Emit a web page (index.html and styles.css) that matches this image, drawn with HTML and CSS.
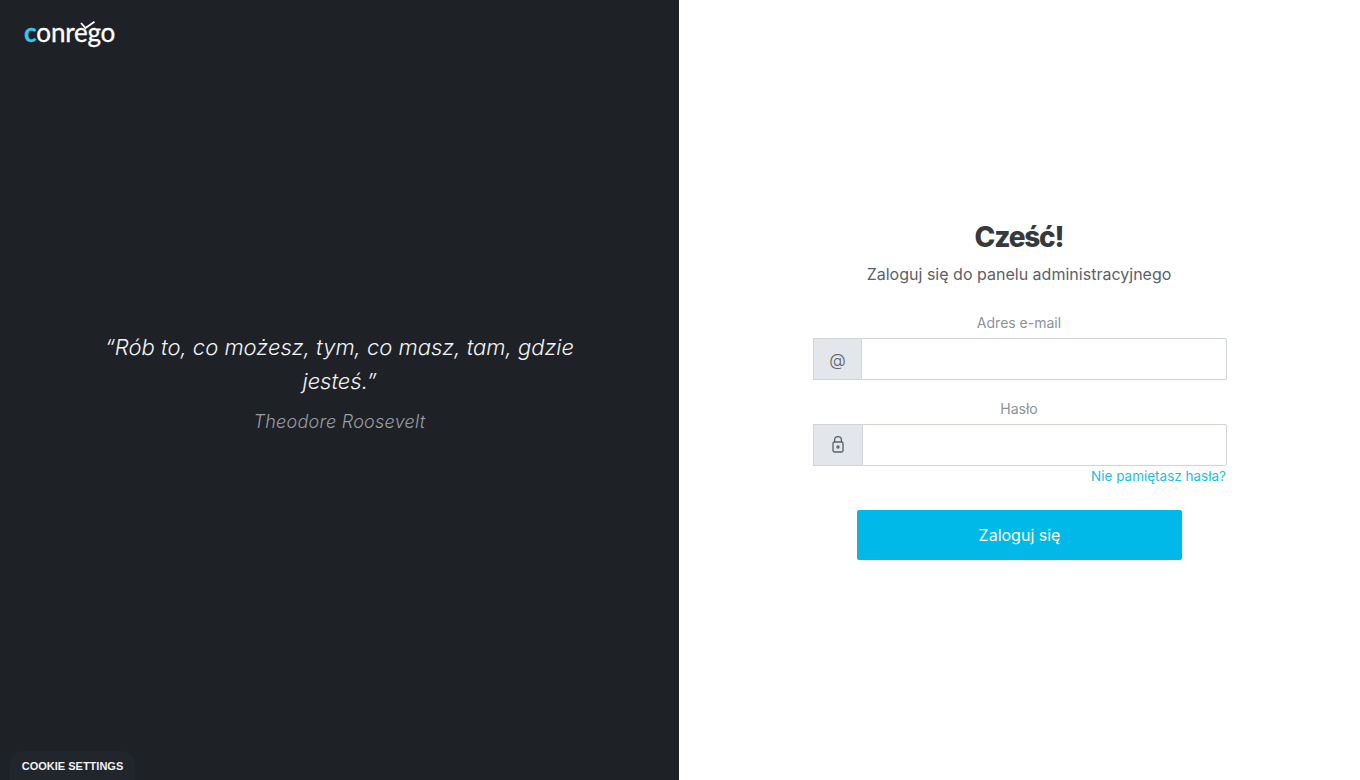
FILE: index.html
```html
<!DOCTYPE html>
<html lang="pl">
<head>
<meta charset="utf-8">
<title>Conrego</title>
<link rel="stylesheet" href="styles.css">
</head>
<body>
<main class="split">
  <section class="side">
    <div class="logo"><span class="logo-c">c</span>onr<span class="logo-e">e<svg class="logo-tick" viewBox="0 0 16 10" width="16" height="10"><path d="M1 2 5.5 7 14.5 .8" fill="none" stroke="#fff" stroke-width="1.8"/></svg></span>go</div>
    <blockquote class="quote">
      <p class="quote-text">“Rób to, co możesz, tym, co masz, tam, gdzie jesteś.”</p>
      <footer class="quote-author">Theodore Roosevelt</footer>
    </blockquote>
    <button class="cookie" type="button">COOKIE SETTINGS</button>
  </section>
  <section class="panel">
    <form class="form">
      <h1 class="title">Cześć!</h1>
      <p class="subtitle">Zaloguj się do panelu administracyjnego</p>
      <label class="label" for="email">Adres e-mail</label>
      <div class="group">
        <span class="addon">@</span>
        <input class="input" id="email" type="email">
      </div>
      <label class="label label-next" for="pass">Hasło</label>
      <div class="group">
        <span class="addon addon-lock">
          <svg viewBox="0 0 12 17" width="12" height="17" fill="none" stroke="#5a6169" stroke-width="1.3"><rect x="1" y="6" width="10" height="10" rx="1.4"/><path d="M2.6 6V4a3.4 3.4 0 0 1 6.8 0v2"/><circle cx="6" cy="11" r="1"/></svg>
        </span>
        <input class="input" id="pass" type="password">
      </div>
      <a class="forgot" href="#">Nie pamiętasz hasła?</a>
      <button class="submit" type="button">Zaloguj się</button>
    </form>
  </section>
</main>
</body>
</html>
```
FILE: styles.css
```css
* { box-sizing: border-box; }
html, body { margin: 0; height: 100%; }
body { font-family: Inter, "Liberation Sans", sans-serif; background: #fff; overflow: hidden; }
.split { display: flex; height: 780px; }
.side {
  position: relative;
  width: 679px;
  flex: none;
  background: #1e2227;
  display: flex;
  align-items: center;
  justify-content: center;
}
.logo {
  position: absolute;
  left: 24px;
  top: 16px;
  font-family: Lato, sans-serif;
  font-size: 26px;
  font-weight: 400;
  line-height: 32px;
  letter-spacing: -0.2px;
  color: #fff;
  -webkit-text-stroke: 0.3px #fff;
}
.logo-c { color: #3cc4ee; font-weight: 700; -webkit-text-stroke: 0.3px #3cc4ee; }
.logo-e { position: relative; }
.logo-tick { position: absolute; left: 6px; top: 5px; }
.quote { margin: 0 0 16px; width: 500px; text-align: center; font-style: italic; }
.quote-text { margin: 0 0 10px; font-size: 22px; line-height: 34px; color: #f1f3f5; font-weight: 300; }
.quote-author { font-size: 18px; line-height: 27px; letter-spacing: .25px; color: #9a9da1; font-weight: 300; }
.cookie {
  position: absolute;
  left: 10px;
  bottom: 0;
  width: 125px;
  height: 29px;
  padding: 2px 0 0;
  border: 0;
  border-radius: 14px 14px 0 0;
  background: #21262c;
  color: #f1f1f1;
  font-family: "Liberation Sans", sans-serif;
  font-size: 11px;
  font-weight: 700;
  line-height: 27px;
}
.panel { flex: 1; display: flex; justify-content: center; }
.form {
  width: 414px;
  margin-left: 1px;
  padding-top: 219px;
  display: flex;
  flex-direction: column;
  align-items: center;
}
.title { margin: 0 2px 0 0; font-size: 28px; line-height: 37px; font-weight: 800; color: #343a40; letter-spacing: -1.2px; }
.subtitle { margin: 6px 2px 0 0; font-size: 16px; line-height: 24px; letter-spacing: .01px; color: #5a6169; }
.label { display: block; margin: 26px 2px 0 0; font-size: 14px; line-height: 21px; color: #8b9299; font-weight: 400; }
.label-next { margin-top: 18px; }
.group { display: flex; width: 100%; height: 42px; margin-top: 5px; }
.addon {
  flex: none;
  width: 48px;
  display: flex;
  align-items: center;
  justify-content: center;
  background: #e3e6ea;
  border: 1px solid #ced4da;
  border-right: 0;
  color: #5a6169;
  font-size: 17px;
  font-weight: 300;
  padding-top: 2px;
}
.addon-lock { width: 49px; padding: 0 0 2px; }
.input { flex: 1; min-width: 0; border: 1px solid #ced4da; border-radius: 0 2px 2px 0; background: #fff; outline: 0; }
.forgot { align-self: flex-end; margin: 0 1px 0 0; font-size: 13.5px; line-height: 21px; color: #1fbce6; text-decoration: none; }
.submit {
  width: 325px;
  height: 50px;
  margin-top: 23px;
  margin-left: -1px;
  border: 0;
  border-radius: 2px;
  background: #00b9e8;
  color: #fff;
  font-family: inherit;
  font-size: 16px;
  font-weight: 400;
}
```
